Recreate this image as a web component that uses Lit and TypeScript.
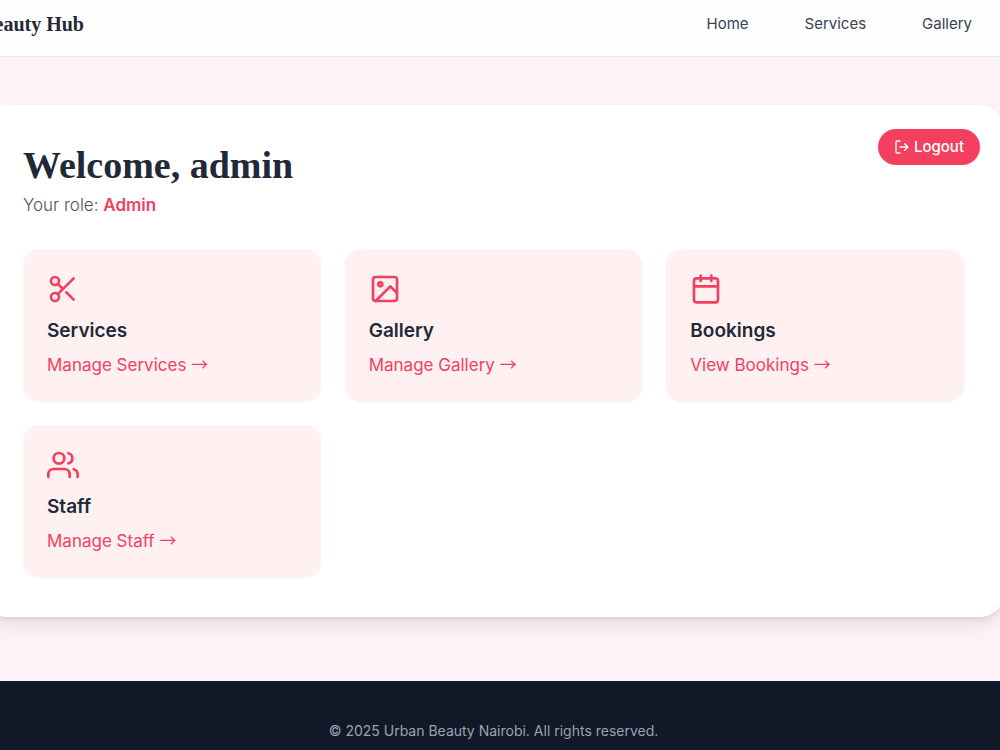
import { LitElement, html, svg, css } from "lit";
import { customElement } from "lit/decorators.js";

const icons = {
  scissors: svg`<circle cx="6" cy="6" r="3"/><circle cx="6" cy="18" r="3"/><path d="M20 4 8.12 15.88M14.47 14.48 20 20M8.12 8.12 12 12"/>`,
  image: svg`<rect x="3" y="3" width="18" height="18" rx="2"/><circle cx="8.5" cy="8.5" r="1.5"/><path d="M21 15 16 10 5 21"/>`,
  calendar: svg`<rect x="3" y="4" width="18" height="18" rx="2"/><path d="M16 2v4M8 2v4M3 10h18"/>`,
  users: svg`<path d="M17 21v-2a4 4 0 0 0-4-4H5a4 4 0 0 0-4 4v2"/><circle cx="9" cy="7" r="4"/><path d="M23 21v-2a4 4 0 0 0-3-3.87M16 3.13a4 4 0 0 1 0 7.75"/>`,
  logout: svg`<path d="M9 21H5a2 2 0 0 1-2-2V5a2 2 0 0 1 2-2h4M16 17l5-5-5-5M21 12H9"/>`,
};

type IconName = keyof typeof icons;

const icon = (name: IconName) =>
  html`<svg class="icon" viewBox="0 0 24 24" aria-hidden="true">${icons[name]}</svg>`;

const navItems = ["Home", "Services", "Gallery"];

const cards: { icon: IconName; title: string; action: string }[] = [
  { icon: "scissors", title: "Services", action: "Manage Services" },
  { icon: "image", title: "Gallery", action: "Manage Gallery" },
  { icon: "calendar", title: "Bookings", action: "View Bookings" },
  { icon: "users", title: "Staff", action: "Manage Staff" },
];

@customElement("app-root")
export class AppRoot extends LitElement {
  static styles = css`
    :host {
      display: block;
      min-height: 100vh;
      overflow: hidden;
      background: #fdf2f8;
      color: #1f2937;
      font-family: Inter, "Open Sans", sans-serif;
      font-size: 17px;
      line-height: 24px;
    }
    * {
      box-sizing: border-box;
    }
    a {
      text-decoration: none;
    }
    .header {
      display: flex;
      align-items: center;
      justify-content: space-between;
      height: 57px;
      padding: 0 28px 8px 0;
      background: #fefefe;
      border-bottom: 1px solid #f3e4ea;
    }
    .brand {
      display: flex;
      justify-content: flex-end;
      width: 84px;
      overflow: hidden;
      color: #1f2937;
      font: bold 20px/28px "Liberation Serif", serif;
      white-space: nowrap;
    }
    .nav {
      display: flex;
      gap: 56px;
    }
    .nav-link {
      color: #374151;
      font-size: 15px;
      line-height: 20px;
    }
    .bleed {
      margin: 0 -4px 0 -17px;
    }
    .panel {
      position: relative;
      margin-top: 48px;
      margin-bottom: 64px;
      padding: 40px;
      background: #fff;
      border-radius: 24px;
      box-shadow: 0 0 1px #fbd5de, 0 10px 15px -3px rgb(0 0 0 / 0.1),
        0 4px 6px -4px rgb(0 0 0 / 0.1);
    }
    .logout {
      position: absolute;
      top: 24px;
      right: 24px;
      display: flex;
      align-items: center;
      gap: 4px;
      padding: 8px 16px;
      border: 0;
      border-radius: 18px;
      background: #f43f5e;
      color: #fff;
      font: 500 15px/20px Inter, sans-serif;
    }
    .icon {
      display: block;
      width: 32px;
      height: 32px;
      fill: none;
      stroke: currentColor;
      stroke-width: 2;
      stroke-linecap: round;
      stroke-linejoin: round;
    }
    .logout .icon {
      width: 16px;
      height: 16px;
    }
    .title {
      margin: 0 0 8px;
      font: bold 38px/40px "Liberation Serif", serif;
    }
    .role {
      margin: 0 0 32px;
      color: #4b5563;
      font-weight: 300;
    }
    .role-name {
      color: #f43f5e;
      font-weight: 600;
    }
    .grid {
      display: grid;
      grid-template-columns: repeat(3, 1fr);
      gap: 24px;
    }
    .card {
      padding: 24px;
      border-radius: 16px;
      background: #fff1f2;
      color: #f43f5e;
      box-shadow: 0 1px 2px rgb(0 0 0 / 0.05);
    }
    .card-title {
      margin: 12px 0 8px;
      color: #1f2937;
      font-size: 19px;
      line-height: 28px;
      font-weight: 600;
    }
    .card-link {
      display: block;
      color: #f43f5e;
    }
    .arrow {
      font-family: "Noto Sans CJK JP", sans-serif;
      line-height: 20px;
    }
    .footer {
      padding: 40px 0;
      background: #111827;
      color: #9ca3af;
      font-size: 14px;
      line-height: 20px;
      text-align: center;
    }
    .copyright {
      margin: 0;
    }
  `;

  render() {
    return html`
      <header class="header">
        <a class="brand" href="#">Beauty Hub</a>
        <nav class="nav">
          ${navItems.map((item) => html`<a class="nav-link" href="#">${item}</a>`)}
        </nav>
      </header>
      <main class="bleed panel">
        <button class="logout" type="button">${icon("logout")}Logout</button>
        <h1 class="title">Welcome, admin</h1>
        <p class="role">Your role: <span class="role-name">Admin</span></p>
        <div class="grid">
          ${cards.map(
            (card) => html`
              <section class="card">
                ${icon(card.icon)}
                <h2 class="card-title">${card.title}</h2>
                <a class="card-link" href="#">${card.action} <span class="arrow">→</span></a>
              </section>
            `
          )}
        </div>
      </main>
      <footer class="bleed footer">
        <p class="copyright">© 2025 Urban Beauty Nairobi. All rights reserved.</p>
      </footer>
    `;
  }
}
